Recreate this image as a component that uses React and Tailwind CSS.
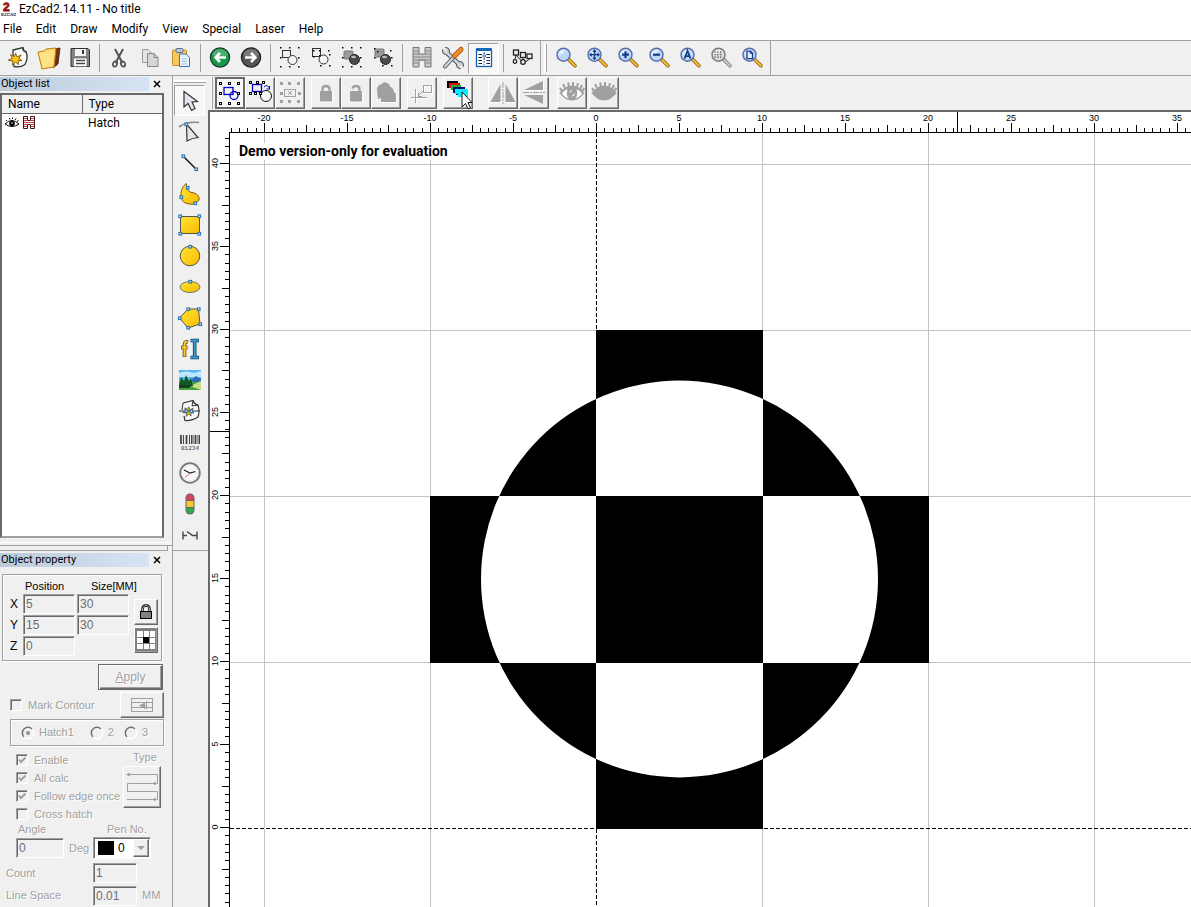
import React, { useState } from "react";

const menus = ["File", "Edit", "Draw", "Modify", "View", "Special", "Laser", "Help"];

const raised =
  "border border-t-white border-l-white border-b-[#696969] border-r-[#696969] shadow-[inset_-1px_-1px_0_#a0a0a0]";
const sunken =
  "border border-t-[#a0a0a0] border-l-[#a0a0a0] border-b-white border-r-white shadow-[inset_1px_1px_0_#696969]";
const disabledText = "text-[#a0a0a0] [text-shadow:1px_1px_0_#fff]";

const Svg = ({ children, className = "w-6 h-6", box = "0 0 24 24", crisp }) => (
  <svg
    viewBox={box}
    className={`${className} shrink-0 overflow-visible`}
    fill="none"
    shapeRendering={crisp ? "crispEdges" : "auto"}
  >
    {children}
  </svg>
);

/* ---------- main toolbar icons ---------- */

const burst = "M11 9 L12.5 13 L17 11 L14.5 14.5 L18 17 L13.8 17 L14 21.5 L11 18.5 L7.5 22 L8.2 17.5 L3 16.5 L7.5 14.5 L5.5 10.5 L9.6 12.6 Z";

const NewIcon = () => (
  <Svg>
    <path d="M7 4 L17 1.500 Q17 4.500 20 5.500 Q22.500 12 19 18.500 Q14 22 8 20.500 Q6.500 12 7 4 Z" fill="#fafafa" stroke="#333" strokeWidth="1.300" />
    <path d="M17 2 Q16 6 20 6" stroke="#333" />
    <path d={burst} transform="translate(-.5 -1) scale(.92)" fill="#ffc61a" stroke="#6b4a00" strokeWidth=".9" />
  </Svg>
);

const OpenIcon = () => (
  <Svg>
    <path d="M17 3 L23 2 L21 18 L16 22 Z" fill="#7a2c12" stroke="#4a1a08" strokeWidth=".8" />
    <path d="M1 6 L7 5 L9 3 L19 2 L17 21 L5 23 Z" fill="#ffd768" stroke="#b98112" />
    <path d="M2 7 L17 4 L15 20 L6 21 Z" fill="#ffe595" opacity=".7" />
  </Svg>
);

const SaveIcon = () => (
  <Svg>
    <path d="M3 2.500 H20 L21.500 4 V20.500 H3 Z" fill="#858585" stroke="#333" />
    <rect x="7" y="3" width="11" height="7" fill="#f4f4f4" />
    <rect x="14" y="4" width="2" height="4" fill="#333" />
    <rect x="5.500" y="12" width="13.500" height="8.500" fill="#fff" stroke="#555" strokeWidth=".6" />
    <path d="M8 14.500 H17 M8 17.500 H17" stroke="#444" strokeWidth="1.400" />
  </Svg>
);

const CutIcon = () => (
  <Svg>
    <path d="M8 3 L15.500 17 M16 3 L8.500 17" stroke="#555" strokeWidth="2" />
    <ellipse cx="8" cy="18" rx="2" ry="2.700" stroke="#555" strokeWidth="1.800" transform="rotate(20 8 18)" />
    <ellipse cx="16" cy="18" rx="2" ry="2.700" stroke="#555" strokeWidth="1.800" transform="rotate(-20 16 18)" />
  </Svg>
);

const CopyIcon = () => (
  <Svg>
    <path d="M4.500 3.500 H10 L13.500 7 V16.500 H4.500 Z" fill="#e6e6e6" stroke="#999" />
    <path d="M9.500 7.500 H16 L20 11.500 V20.500 H9.500 Z" fill="#d6d6d6" stroke="#888" />
    <path d="M16 7.500 V11.500 H20" stroke="#888" />
  </Svg>
);

const PasteIcon = () => (
  <Svg>
    <rect x="3.500" y="4" width="14" height="15.500" rx="1" fill="#f7c75c" stroke="#c08f2c" />
    <rect x="7" y="2.500" width="7" height="4" rx="1" fill="#b9c4d4" stroke="#5f7390" />
    <path d="M10.500 8 H17 L20.500 11.500 V20.500 H10.500 Z" fill="#e8f3ff" stroke="#3d73b5" />
    <path d="M12.500 13 H18 M12.500 15.500 H18 M12.500 18 H18" stroke="#9cc2ea" />
  </Svg>
);

const RoundArrow = ({ back }) => (
  <Svg>
    <circle cx="12" cy="11.500" r="9.600" fill={back ? "#17994a" : "#555"} stroke={back ? "#173d27" : "#222"} strokeWidth="1.300" />
    <path d="M4 9 A8.500 8.500 0 0 1 20 9 Q12 13 4 9 Z" fill="#fff" opacity=".22" />
    <path
      d={back ? "M18 11.500 H8 M12 7 L7.500 11.500 L12 16" : "M6 11.500 H16 M12 7 L16.500 11.500 L12 16"}
      stroke="#fff"
      strokeWidth="2.600"
    />
  </Svg>
);

const Dots = ({ color = "#000", pts }) =>
  pts.map(([x, y]) => (
    <rect key={`${x}-${y}`} x={x} y={y} width="1.500" height="1.500" fill={color} />
  ));

const eightDots = [[2, 1], [11, 1], [20, 1], [2, 11], [20, 11], [2, 20], [11, 20], [20, 20]];
const innerDots = [[4, 4], [10, 4], [10, 9], [20, 8], [4, 10], [20, 19], [11, 19]];

const CombineIcon = () => (
  <Svg>
    <rect x="4.500" y="4.500" width="8" height="7" stroke="#333" />
    <circle cx="14.500" cy="14" r="4.500" fill="#f4f4f4" stroke="#333" />
    <Dots pts={eightDots} />
  </Svg>
);

const UncombineIcon = () => (
  <Svg>
    <rect x="3.500" y="2.500" width="8" height="8" stroke="#333" />
    <circle cx="14.500" cy="13.500" r="4.500" fill="#f4f4f4" stroke="#333" />
    <Dots pts={[...innerDots, [19, 4]]} />
  </Svg>
);

const GroupIcon = ({ split }) => (
  <Svg>
    <rect x="4" y={split ? 3 : 5} width="9" height="8" rx="1" fill="#9a9a9a" stroke="#777" />
    <circle cx="14.500" cy="13.500" r="5" fill="#4a4a4a" stroke="#222" />
    <ellipse cx="13.500" cy="11" rx="2.500" ry="1.300" fill="#bbb" />
    <Dots pts={split ? [[3, 2], [6, 5], [19, 4], [3, 11], [20, 11], [11, 19], [20, 19]] : eightDots} />
  </Svg>
);

const HatchIcon = () => (
  <Svg>
    <path d="M3 1.500 H9 V8 H15 V1.500 H21 V21 H15 V14 H9 V21 H3 Z" fill="#c9c9c9" stroke="#777" />
    <path d="M3 5 H9 M15 5 H21 M3 8 H9 M15 8 H21 M3 11 H21 M3 14 H21 M3 17 H9 M15 17 H21" stroke="#888" />
  </Svg>
);

const ToolsIcon = () => (
  <Svg>
    <path d="M4.500 5.500 L19 19" stroke="#4a4f55" strokeWidth="4.500" />
    <circle cx="5" cy="5" r="3.500" fill="#c8ccd0" stroke="#4a4f55" />
    <circle cx="19" cy="19" r="3.500" fill="#c8ccd0" stroke="#4a4f55" />
    <path d="M4.500 5.500 L19 19" stroke="#d4d8dc" strokeWidth="2.600" />
    <path d="M2 1 L5 5 M22 23 L19 19.500" stroke="#f0f0f0" strokeWidth="2.600" />
    <path d="M12 12 L4 20.500" stroke="#4a4f55" strokeWidth="4" strokeLinecap="round" />
    <path d="M12 12 L4 20.500" stroke="#d4d8dc" strokeWidth="2.200" strokeLinecap="round" />
    <path d="M13.500 10 L20 3.500" stroke="#9c4a08" strokeWidth="5" strokeLinecap="round" />
    <path d="M13.500 10 L20 3.500" stroke="#f58a1f" strokeWidth="3.400" strokeLinecap="round" />
  </Svg>
);

const ListIcon = () => (
  <Svg>
    <rect x="4.500" y="3.500" width="15" height="17" fill="#fff" stroke="#0f5fb0" strokeWidth="1.300" />
    <rect x="4" y="2" width="16" height="3" rx="1" fill="#1567bd" />
    <path d="M6.500 8.500 H10 M6.500 11.500 H10 M6.500 14.500 H10 M6.500 17.500 H10 M14.500 8.500 H18 M14.500 11.500 H18 M14.500 14.500 H18 M14.500 17.500 H18" stroke="#222" />
    <path d="M12.200 6 V19" stroke="#1567bd" strokeDasharray="2 1" />
    <circle cx="12.200" cy="10" r="1.300" fill="#fff" stroke="#1567bd" />
  </Svg>
);

const NodesIcon = () => (
  <Svg>
    <rect x="2.500" y="4" width="5" height="5" stroke="#222" strokeWidth="1.300" />
    <rect x="9.500" y="6.500" width="5" height="5" stroke="#222" strokeWidth="1.300" />
    <rect x="16" y="8" width="5" height="4.500" stroke="#222" strokeWidth="1.300" />
    <circle cx="4" cy="15.500" r="1.800" stroke="#222" strokeWidth="1.300" />
    <circle cx="12" cy="16" r="2.300" stroke="#222" strokeWidth="1.300" />
    <path d="M5 9 L4 13 M5 9 L10 14.500 M12 12 V14 M18.500 13 L14.500 16" stroke="#222" />
  </Svg>
);

const zoomMarks = {
  area: null,
  pan: <path d="M9 5 V14 M4.500 9.500 H13.500 M7.500 6.500 L9 5 L10.500 6.500 M7.500 12.500 L9 14 L10.500 12.500 M6 8 L4.500 9.500 L6 11 M12 8 L13.500 9.500 L12 11" stroke="#153f85" strokeWidth="1.300" />,
  in: <path d="M9 6 V13 M5.500 9.500 H12.500" stroke="#153f85" strokeWidth="2.200" />,
  out: <path d="M5.500 9.500 H12.500" stroke="#153f85" strokeWidth="2.200" />,
  all: <path d="M6 13.500 L9 5.500 L12 13.500 M7 11 H11" stroke="#153f85" strokeWidth="1.700" />,
  dots: <path d="M5 7 H13 M5 9.500 H13 M5 12 H13" stroke="#444" strokeWidth="1.200" strokeDasharray="1.200 1.600" />,
  page: <path d="M6.500 6 H10 L12 8 V13.500 H6.500 Z M10 6 V8 H12" fill="#e8f1ff" stroke="#153f85" strokeWidth="1.300" />,
};

const ZoomIcon = ({ kind }) => {
  const gray = kind === "dots";
  return (
    <Svg>
      <g transform="translate(-.5 -.8)">
        <path d="M14 14 L20.500 20.500" stroke={gray ? "#777" : "#8a5a08"} strokeWidth="3.600" strokeLinecap="round" />
        <path d="M14.500 14.500 L20.500 20.500" stroke={gray ? "#ccc" : "#f6be35"} strokeWidth="2" strokeLinecap="round" />
        <circle cx="9" cy="9.500" r="6.500" fill={gray ? "#dedede" : "#bcd8f8"} stroke={gray ? "#777" : "#5c6ca8"} strokeWidth="1.400" />
        <path d="M4 8 Q6 4 11 4.500 Q9 9 4 10 Z" fill="#fff" opacity=".6" />
        {zoomMarks[kind]}
      </g>
    </Svg>
  );
};

/* ---------- second toolbar icons ---------- */

const HollowDots = ({ pts }) =>
  pts.map(([x, y]) => (
    <rect key={`${x}-${y}`} x={x + 0.5} y={y + 0.5} width="2" height="2" fill="#fff" stroke="#000" />
  ));

const selDots = [[1, 1], [10, 1], [19, 1], [1, 11], [19, 11], [1, 21], [10, 21], [19, 21]];

const SelectShapesIcon = () => (
  <Svg>
    <rect x="6" y="6.500" width="9" height="7" stroke="#0000c8" strokeWidth="1.300" />
    <circle cx="16" cy="14.500" r="4" stroke="#0000c8" strokeWidth="1.300" />
    <HollowDots pts={selDots} />
  </Svg>
);

const SelectPickIcon = () => (
  <Svg>
    <rect x="4.500" y="3.500" width="9" height="7" stroke="#0000c8" strokeWidth="1.300" />
    <circle cx="18" cy="15" r="5.500" fill="#f7f7f7" stroke="#111" />
    <path d="M16 6 Q19 3 21.500 7 M21.500 8 V5 M22 8 H18.500" stroke="#0000c8" />
    <HollowDots pts={[[1, 0], [8, 0], [14, 0], [1, 11], [6, 11], [11, 11]]} />
  </Svg>
);

const SelectClearIcon = () => (
  <Svg crisp>
    <rect x="6.500" y="8.500" width="11" height="7" stroke="#a0a0a0" />
    <path d="M10 10 L14 14 M14 10 L10 14" stroke="#a0a0a0" strokeWidth="1.300" />
    {[[2, 1], [10, 1], [19, 1], [2, 11], [20, 11], [2, 19], [10, 19], [19, 19]].map(([x, y]) => (
      <rect key={`${x}-${y}`} x={x} y={y} width="3" height="3" fill="#a0a0a0" />
    ))}
  </Svg>
);

const LockIcon = ({ open, multi }) => (
  <Svg>
    {multi ? (
      <>
        <path d="M3 9 Q3 4 8 3 Q9 0 13 2 Q16 3 16 6 V14 L4 18 Z" fill="#a0a0a0" />
        <path d="M7 12 Q8 6 13 5 Q19 5 20 11 L22 13 V21 H7 Z" fill="#a0a0a0" />
        <path d="M7 21.500 H22.500 V13" stroke="#fff" />
      </>
    ) : (
      <>
        <path d="M6 21 H19 V11" stroke="#fff" />
        <rect x="6" y="10" width="12" height="10.500" rx="1" fill="#a0a0a0" />
        <path d={open ? "M8.500 7.500 Q9 5 12 5 Q15.500 5 15.500 8 V11" : "M8.500 11 V8 Q8.500 5 12 5 Q15.500 5 15.500 8 V11"} stroke="#a0a0a0" strokeWidth="2.300" />
      </>
    )}
  </Svg>
);

const OriginIcon = () => (
  <Svg crisp>
    <g transform="translate(1 1)" stroke="#fff">
      <path d="M5.500 8 V22 M1 16.500 H17" />
      <rect x="13.500" y="4.500" width="8" height="7" />
    </g>
    <path d="M5.500 8 V22 M1 16.500 H17 M13 10 L8 15 M8 11.500 V15 H11.500" stroke="#a0a0a0" />
    <rect x="13.500" y="4.500" width="8" height="7" stroke="#a0a0a0" />
  </Svg>
);

const LayersIcon = () => (
  <Svg>
    <path d="M1 0 H12 V5 H4 V7 H1 Z" fill="#000" />
    <path d="M3 2 H14 V9 H5 V7 H3 Z" fill="#d81010" />
    <path d="M5 4 H15 V11 H8 V9 H5 Z" fill="#20b030" />
    <path d="M7 6 H19 V14 H10 V12 H7 Z" fill="#00107c" />
    <path d="M9 8 H22 V16 H12 V13 H9 Z" fill="#00f0ff" />
    <path d="M16 11 V26 L19.500 22.500 L22 28 L24.500 27 L22 21.500 H26 Z" fill="#fff" stroke="#000" strokeWidth=".9" />
  </Svg>
);

const MirrorXIcon = () => (
  <Svg>
    <path d="M9.500 3 V21 H-.5 Z M14.500 3 V21 H24.500 Z" fill="#a0a0a0" />
    <path d="M12 1 V23" stroke="#a0a0a0" strokeDasharray="6 1 2 1" />
    <path d="M0 21.500 H10.500 M14.500 21.500 H25" stroke="#fff" />
  </Svg>
);

const MirrorYIcon = () => (
  <Svg>
    <path d="M21 0 V9 H2 Z M21 14 V23 L2 14 Z" fill="#a0a0a0" />
    <path d="M1 11.500 H23" stroke="#a0a0a0" strokeDasharray="6 1 2 1" />
    <path d="M2 9.500 H21.500 V0" stroke="#fff" />
  </Svg>
);

const BigEye = ({ filled }) => (
  <Svg>
    <path d="M2 10 L0 7 M5 7 L3 3 M9 5.500 L8 1.500 M13 5 V1 M17 6 L18 2 M20 8 L22 4 M22 10 L24.500 7" stroke="#a0a0a0" strokeWidth="2" />
    <path d="M-.5 12 Q5 4.500 12 4.500 Q19 4.500 24.500 12 Q19 19.500 12 19.500 Q5 19.500 -.5 12 Z" fill="#a0a0a0" />
    {!filled && (
      <>
        <path d="M2 12.500 Q5 8.500 7.500 8.500 Q5.500 14 9 17.500 Q4 16 2 12.500 Z M22 12.500 Q19 8.500 16.500 8.500 Q18.500 14 15 17.500 Q20 16 22 12.500 Z" fill="#fff" />
        <path d="M10 11.500 Q10 9.500 12 9.500 M14.500 12.500 Q14.500 15 12 15" stroke="#fff" strokeWidth="1" />
      </>
    )}
  </Svg>
);

/* ---------- drawing tool icons ---------- */

const Handles = ({ pts }) =>
  pts.map(([x, y]) => (
    <rect key={`${x}-${y}`} x={x - 1} y={y - 1} width="2.500" height="2.500" fill="#fff" stroke="#2878b8" strokeWidth="1.200" />
  ));

const Gold = () => (
  <defs>
    <linearGradient id="gold" x1="0" y1="0" x2="1" y2="1">
      <stop offset="0" stopColor="#ffe534" />
      <stop offset="1" stopColor="#f9b900" />
    </linearGradient>
  </defs>
);

const PickTool = () => (
  <Svg>
    <path d="M6 2.500 V18 L10 14.500 L13.500 21.500 L17 19.500 L14 13 L19.500 12.500 Z" fill="#e4e6ee" stroke="#333" strokeWidth="1.200" />
  </Svg>
);
const NodeTool = () => (
  <Svg>
    <path d="M1 7 Q9 1 21 2.500" stroke="#888" strokeWidth="1.600" />
    <path d="M8.500 4 L9 21 Q14 18 20 17.500 Z" fill="#e4e6ee" stroke="#333" strokeWidth="1.200" />
    <Handles pts={[[8, 4]]} />
  </Svg>
);
const LineTool = () => (
  <Svg>
    <path d="M5 5 L18 18" stroke="#111" strokeWidth="1.400" />
    <Handles pts={[[5, 5], [18, 18]]} />
  </Svg>
);
const CurveTool = () => (
  <Svg>
    <Gold />
    <path d="M3 15 Q2 7 8 1.500 L9.500 6 Q9 10 16 11 Q22 13 21 18 Q18 23 11 22 Q4 21 3 15 Z" fill="url(#gold)" stroke="#8a5512" />
    <Handles pts={[[9.500, 5.500], [3, 15], [17, 21]]} />
  </Svg>
);
const RectTool = () => (
  <Svg>
    <rect x="2.500" y="3.500" width="19" height="17" fill="url(#gold)" stroke="#555" />
    <Handles pts={[[2, 3], [21, 3], [2, 20.500], [21, 20.500]]} />
  </Svg>
);
const CircleTool = () => (
  <Svg>
    <circle cx="12" cy="12" r="9.800" fill="url(#gold)" stroke="#555" />
    <Handles pts={[[12, 2.500]]} />
  </Svg>
);
const EllipseTool = () => (
  <Svg>
    <ellipse cx="12" cy="12" rx="10" ry="5.500" fill="url(#gold)" stroke="#777" />
    <Handles pts={[[12, 6.500]]} />
  </Svg>
);
const PolygonTool = () => (
  <Svg>
    <path d="M1.500 12 L10 3 L20.500 3 L22 18 L10 22 Z" fill="url(#gold)" stroke="#555" />
    <Handles pts={[[1.500, 12], [10, 3], [20.500, 3], [22, 18], [10, 21.500]]} />
  </Svg>
);
const TextTool = () => (
  <Svg>
    <path d="M10 5 Q6.500 4 6.500 7.500 V20 M3 10.500 H9.500" stroke="#5b4306" strokeWidth="3.600" />
    <path d="M9.500 5 Q6.500 4 6.500 7.500 V19.500 M3.500 10.500 H9" stroke="#ffcd2a" strokeWidth="2" />
    <path d="M12.500 3.500 H21 M12.500 20.500 H21 M16.700 3 V21" stroke="#12405f" strokeWidth="3.600" />
    <path d="M13 3.500 H20.500 M13 20.500 H20.500 M16.700 3 V21" stroke="#3e9bd0" strokeWidth="2" />
  </Svg>
);
const ImageTool = () => (
  <Svg>
    <rect x="1" y="2" width="22" height="20" fill="#58b5ee" />
    <path d="M1 5 Q8 2 16 5 L23 3 V9 H1 Z" fill="#bfe8ff" />
    <path d="M13 12 L18 8 L23 11 V14 H10 Z" fill="#2f6db5" />
    <path d="M1 14 H23 V22 H1 Z" fill="#46a03a" />
    <path d="M23 13 L12 18 L23 22 Z" fill="#c8dd8a" />
    <path d="M1 18 L3 9 L6 13 L8 7 L11 13 L13 10 L15 18 Z" fill="#125a24" />
    <path d="M1 17 H15 L11 20 H1 Z" fill="#16421c" />
  </Svg>
);
const VectorTool = () => (
  <Svg>
    <path d="M5 4 L15 1.500 Q16 5 20 6 Q22 13 20 18 Q14 22 7 21.500 L6 17" fill="#f7f7f7" stroke="#333" strokeWidth="1.200" />
    <path d="M5 4 L4 11" stroke="#333" />
    <path d="M15 2 L14 7 L20 6" stroke="#333" />
    <path d={burst} transform="translate(2.500 1) scale(.75)" fill="#f5cc31" stroke="#4a4a20" />
    <path d="M1 12 H22" stroke="#333" />
    <Handles pts={[[8, 12], [13, 12]]} />
  </Svg>
);
const BarcodeTool = () => (
  <Svg>
    <path d="M3 5 V14 M8.500 5 V14 M17.500 5 V14" stroke="#444" strokeWidth="1.800" />
    <path d="M5.500 5 V14 M11.500 5 V14 M13.500 5 V14 M15 5 V14 M20 5 V14 M21.500 5 V14" stroke="#444" />
    <text x="12" y="19.500" textAnchor="middle" fontSize="6" fill="#333" fontFamily="Liberation Mono, monospace" textRendering="geometricPrecision">01234</text>
  </Svg>
);
const ClockTool = () => (
  <Svg>
    <circle cx="12" cy="12" r="9.800" fill="#f8f8f8" stroke="#777" strokeWidth="1.800" />
    <circle cx="12" cy="12" r="7.800" stroke="#bbb" strokeWidth=".8" strokeDasharray="1 3" />
    <path d="M6 9 L12 12 L17.500 10.500" stroke="#222" strokeWidth="1.200" />
    <path d="M12 12 L7 16.500" stroke="#e06060" />
  </Svg>
);
const LightTool = () => (
  <Svg>
    <rect x="7.500" y="1.500" width="9" height="21" rx="4.500" fill="#666" />
    <path d="M8.500 8 V6 A3.500 3.500 0 0 1 15.500 6 V8 Z" fill="#d6455c" />
    <rect x="8.500" y="9" width="7" height="6" fill="#f7c928" />
    <path d="M8.500 16 V18 A3.500 3.500 0 0 0 15.500 18 V16 Z" fill="#30a94e" />
  </Svg>
);
const AxisTool = () => (
  <Svg>
    <path d="M5 8.500 V16.500 M19 8.500 V16.500 M5 12.500 H9 M9 8.500 L14.500 12.500 H19" stroke="#444" strokeWidth="1.400" />
  </Svg>
);

const mainTools = [
  [["New", <NewIcon />], ["Open", <OpenIcon />], ["Save", <SaveIcon />]],
  [["Cut", <CutIcon />], ["Copy", <CopyIcon />], ["Paste", <PasteIcon />]],
  [["Undo", <RoundArrow back />], ["Redo", <RoundArrow />]],
  [["Combine", <CombineIcon />], ["Uncombine", <UncombineIcon />], ["Group", <GroupIcon />], ["Ungroup", <GroupIcon split />]],
  [["Hatch", <HatchIcon />], ["System parameters", <ToolsIcon />], ["Object list", <ListIcon />, true]],
  [["Nodes", <NodesIcon />]],
];

const selectTools = [
  [["Select", <SelectShapesIcon />], ["Invert selection", <SelectPickIcon />], ["Clear selection", <SelectClearIcon />]],
  [["Lock", <LockIcon />], ["Unlock", <LockIcon open />], ["Unlock all", <LockIcon multi />]],
  [["Put to origin", <OriginIcon />]],
  [["Layers", <LayersIcon />]],
];

const drawTools = [
  ["Pick", <PickTool />],
  ["Node edit", <NodeTool />],
  ["Line", <LineTool />],
  ["Curve", <CurveTool />],
  ["Rectangle", <RectTool />],
  ["Circle", <CircleTool />],
  ["Ellipse", <EllipseTool />],
  ["Polygon", <PolygonTool />],
  ["Text", <TextTool />],
  ["Bitmap", <ImageTool />],
  ["Vector file", <VectorTool />],
  ["Barcode", <BarcodeTool />],
  ["Delay", <ClockTool />],
  ["Input port", <LightTool />],
  ["Extend axis", <AxisTool />],
];

const FlatButton = ({ label, pressed, onClick, children }) => (
  <button
    type="button"
    aria-label={label}
    onClick={onClick}
    className={`flex h-[31px] w-[31px] shrink-0 items-center justify-center ${
      pressed ? "border border-t-[#a0a0a0] border-l-[#a0a0a0] border-b-white border-r-white bg-[#f8f8f8]" : ""
    }`}
  >
    {children}
  </button>
);

const BevelButton = ({ label, pressed, children }) => (
  <button
    type="button"
    aria-label={label}
    className={`flex h-8 w-[30px] shrink-0 items-center justify-center ${
      pressed ? "border-2 border-[#696969] bg-[#f8f8f8]" : raised
    }`}
  >
    {children}
  </button>
);

const MainToolbar = () => (
  <div className="flex h-9 shrink-0 items-center border-y border-[#a0a0a0] pl-0.5">
    {mainTools.map((group, i) => (
      <div key={i} className="flex items-center">
        {i > 0 && <span className="mr-[3px] ml-1 h-7 w-px shrink-0 bg-[#a0a0a0]" />}
        {group.map(([label, icon, pressed]) => (
          <FlatButton key={label} label={label} pressed={pressed}>
            {icon}
          </FlatButton>
        ))}
      </div>
    ))}
    <span className="ml-0.5 h-full w-1 shrink-0 border-l border-[#a0a0a0]" />
    <span className="mr-1 h-7 w-[3px] shrink-0 border-r border-[#a0a0a0] bg-white" />
    <div className="flex h-full items-center border-r border-[#a0a0a0] pr-0.5">
      {Object.keys(zoomMarks).map((kind) => (
        <FlatButton key={kind} label={`Zoom ${kind}`}>
          <ZoomIcon kind={kind} />
        </FlatButton>
      ))}
    </div>
  </div>
);

const SelectToolbar = () => (
  <div className="flex h-[34px] shrink-0 items-center overflow-hidden pl-[3px]">
    <span className="mr-0.5 h-8 w-[2px] shrink-0 border-r border-[#a0a0a0] bg-white" />
    <div className="flex gap-1.5">
      {selectTools.map((group, i) => (
        <div key={i} className="flex">
          {group.map(([label, icon]) => (
            <BevelButton key={label} label={label} pressed={label === "Select"}>
              {icon}
            </BevelButton>
          ))}
        </div>
      ))}
    </div>
    <div className="ml-[15px] flex gap-px">
      <BevelButton label="Mirror horizontal"><MirrorXIcon /></BevelButton>
      <BevelButton label="Mirror vertical"><MirrorYIcon /></BevelButton>
    </div>
    <div className="ml-2 flex gap-0.5">
      <BevelButton label="Show"><BigEye /></BevelButton>
      <BevelButton label="Hide"><BigEye filled /></BevelButton>
    </div>
  </div>
);

const DrawToolbar = () => {
  const [tool, setTool] = useState("Pick");
  return (
    <div className="flex w-9 shrink-0 flex-col border-l border-[#a0a0a0]">
      <div className="flex flex-col items-center border-b border-[#a0a0a0] pr-0.5">
        <span className="mt-1 mb-0.5 h-[3px] w-8 border-y border-t-white border-b-[#a0a0a0] bg-white" />
        {drawTools.map(([label, icon]) => (
          <FlatButton key={label} label={label} pressed={tool === label} onClick={() => setTool(label)}>
            {icon}
          </FlatButton>
        ))}
      </div>
    </div>
  );
};

/* ---------- canvas ---------- */

const UNIT = 16.6;
const X0 = 386;
const Y0 = 716;
const px = (v) => Math.round(X0 + v * UNIT);
const py = (v) => Math.round(Y0 - v * UNIT);

const range = (from, to) => Array.from({ length: Math.max(0, to - from + 1) }, (_, i) => from + i);
const tickSize = (i) => (i % 10 === 0 ? 10 : i % 5 === 0 ? 8 : 5);

// edges include the grid pixel on the right and at the bottom
const rectPath = (x1, y1, x2, y2) => `M${px(x1)} ${py(y1) + 1} H${px(x2) + 1} V${py(y2)} H${px(x1)} Z`;
const circlePath = `M${px(-7) + 1} ${py(15)} A198.500 198.500 0 0 1 ${px(17)} ${py(15)} A198.500 198.500 0 0 1 ${px(-7) + 1} ${py(15)} Z`;
const shape = [rectPath(0, 0, 10, 30), rectPath(-10, 10, 20, 20), circlePath].join(" ");

const Canvas = () => {
  // last ruler numbers that still fit in the window
  const lastX = Math.floor((window.innerWidth - 218 - X0) / UNIT / 5);
  const lastY = Math.floor((window.innerHeight - 120 - Y0) / UNIT / 5);

  return (
    <div className="min-h-0 flex-1 overflow-hidden border-t-2 border-l-2 border-[#696969] bg-white">
      <svg className="block h-full w-full" fontFamily="Liberation Sans, Arial, sans-serif">
        <g shapeRendering="crispEdges">
          {range(-2, 12).map((i) => (
            <line key={i} x1={px(i * 10) + 0.5} x2={px(i * 10) + 0.5} y1="21" y2="100%" stroke="#c4c4c4" />
          ))}
          {range(-3, 4).map((i) => (
            <line key={i} x1="20" x2="100%" y1={py(i * 10) + 0.5} y2={py(i * 10) + 0.5} stroke="#c4c4c4" />
          ))}
          <line x1={X0 + 0.5} x2={X0 + 0.5} y1="21" y2="100%" stroke="#fff" />
          <line x1="20" x2="100%" y1={Y0 + 0.5} y2={Y0 + 0.5} stroke="#fff" />
          <line x1={X0 + 0.5} x2={X0 + 0.5} y1="21" y2="100%" stroke="#000" strokeDasharray="4 2" />
          <line x1="20" x2="100%" y1={Y0 + 0.5} y2={Y0 + 0.5} stroke="#000" strokeDasharray="4 2" />
        </g>
        <path d={circlePath} fill="#fff" />
        <path d={shape} fillRule="evenodd" fill="#000" />
        <g stroke="#000" shapeRendering="crispEdges">
          <line x1="19" x2="100%" y1="20.5" y2="20.5" />
          <line x1="19.5" x2="19.5" y1="20" y2="100%" />
          {range(-44, 240).map((i) => {
            const x = px(i / 2) + 0.5;
            return <line key={i} x1={x} x2={x} y1={21 - tickSize(i)} y2="20" />;
          })}
          {range(-60, 83).map((i) => {
            const y = py(i / 2) - 0.5;
            return <line key={i} x1={20 - tickSize(i)} x2="19" y1={y} y2={y} />;
          })}
          <line x1="747.5" x2="747.5" y1="0" y2="20" />
          <line x1="0" x2="19" y1="319.5" y2="319.5" />
        </g>
        <g fontSize="9" fill="#000" textAnchor="middle">
          {range(-4, lastX).map((i) => (
            <text key={i} x={px(i * 5)} y="9">
              {i * 5}
            </text>
          ))}
          {range(lastY, 8).map((i) => (
            <text key={i} transform={`translate(8 ${py(i * 5) - 1}) rotate(-90)`}>
              {i * 5}
            </text>
          ))}
        </g>
        <rect x="28" y="31" width="220" height="17" fill="#fff" />
        <text x="29" y="44" fontFamily="Roboto, sans-serif" fontSize="14" fontWeight="700">
          Demo version-only for evaluation
        </text>
      </svg>
    </div>
  );
};

/* ---------- left panels ---------- */

const PanelTitle = ({ children }) => (
  <div className="flex h-3.5 shrink-0 items-center">
    <h2 className="h-full w-[149px] bg-linear-to-r from-[#bccbda] to-[#d6e4f3] pl-px text-[11px] leading-[14px]">
      {children}
    </h2>
    <button type="button" aria-label={`Close ${children}`} className="flex h-full w-4 items-center justify-center">
      <Svg className="h-1.5 w-1.5" box="0 0 6 6">
        <path d="M0 0 L6 6 M6 0 L0 6" stroke="#000" strokeWidth="1.500" />
      </Svg>
    </button>
  </div>
);

const ObjectList = () => (
  <section className="flex min-h-0 flex-1 flex-col pt-px">
    <PanelTitle>Object list</PanelTitle>
    <div className="mt-0.5 mr-2 min-h-0 flex-1 overflow-hidden border-2 border-t-[#696969] border-l-[#696969] border-r-[#696969] border-b-[#a0a0a0] bg-white">
      <table className="w-full table-fixed leading-4">
        <thead>
          <tr className="h-[18px] bg-[#f0f0f0] text-left">
            <th className="w-1/2 border-r border-b border-[#696969] pl-1.5 font-normal">Name</th>
            <th className="border-b border-[#696969] pl-1.5 font-normal">Type</th>
          </tr>
        </thead>
        <tbody>
          <tr className="h-[19px]">
            <td className="pl-[3px]">
              <span className="flex items-center gap-[3px]">
                <Svg className="h-3.5 w-3.5" box="0 0 14 14">
                  <path d="M0 8 Q7 1 14 8 Q7 13 0 8 Z" stroke="#000" />
                  <path d="M2 5 L1 4 M5 3.500 L4.500 2 M7.500 3 V1.500 M10 4 L11 2.500 M12 5.500 L13.500 4.500" stroke="#000" />
                  <circle cx="7" cy="7.500" r="2.800" fill="#000" />
                  <circle cx="7" cy="7" r=".8" fill="#fff" />
                </Svg>
                <Svg className="h-3.5 w-3.5" box="0 0 14 14">
                  <path d="M1.500 .5 H5.500 V4.500 H8.500 V.5 H12.500 V12.500 H8.500 V8.500 H5.500 V12.500 H1.500 Z" fill="#fff" stroke="#401010" />
                  <path d="M2 2.500 H5 M9 2.500 H12 M2 4.500 H5 M9 4.500 H12 M2 6.500 H12 M2 8.500 H5 M9 8.500 H12 M2 10.500 H5 M9 10.500 H12" stroke="#c84040" />
                </Svg>
              </span>
            </td>
            <td className="pl-1.5">Hatch</td>
          </tr>
        </tbody>
      </table>
    </div>
  </section>
);

const NumInput = ({ id, value, className = "", label }) => (
  <input
    id={id}
    type="text"
    disabled
    defaultValue={value}
    aria-label={label}
    className={`${sunken} h-5 min-w-0 bg-[#f0f0f0] pl-0.5 text-[12px] text-[#6d6d6d] ${className}`}
  />
);

const Check = ({ children, checked }) => (
  <label className={`flex h-[18px] items-center gap-1.5 ${disabledText}`}>
    <span className="relative flex h-3 w-3">
      <input type="checkbox" disabled defaultChecked={checked} className={`${sunken} h-3 w-3 appearance-none`} />
      {checked && (
        <Svg className="absolute top-0 left-0 h-3 w-3" box="0 0 12 12">
          <path d="M3 5.500 L5 8 L9.500 3.500" stroke="#a0a0a0" strokeWidth="2" />
        </Svg>
      )}
    </span>
    {children}
  </label>
);

const Radio = ({ children, checked }) => (
  <label className={`flex items-center gap-[5px] ${disabledText}`}>
    <span className="relative flex h-3 w-3">
      <input type="radio" name="hatch" disabled defaultChecked={checked} className="h-3 w-3 appearance-none" />
      <Svg className="absolute top-0 left-0 h-3 w-3" box="0 0 12 12">
        <path d="M2 10 A5 5 0 0 1 10 2" stroke="#707070" strokeWidth="1.500" />
        <path d="M2 10 A5 5 0 0 0 10 2" stroke="#fff" strokeWidth="1.500" />
        {checked && <circle cx="6" cy="6" r="2" fill="#909090" />}
      </Svg>
    </span>
    {children}
  </label>
);

const PropButton = ({ label, className = "", children }) => (
  <button type="button" aria-label={label} className={`${raised} flex items-center justify-center ${className}`}>
    {children}
  </button>
);

const Position = () => (
  <div className="mt-[7px] ml-0.5 flex w-40 gap-[5px] border border-[#a0a0a0] pt-1 pr-px pb-1 pl-[7px] shadow-[inset_1px_1px_0_#fff,1px_1px_0_#fff]">
    <div className="grid grid-cols-[11px_52px_52px] items-center gap-x-0.5 gap-y-px">
      <span />
      <span className="h-[14px] pl-0.5 leading-[14px]">Position</span>
      <span className="h-[14px] pl-3.5 leading-[14px] whitespace-nowrap">Size[MM]</span>
      <label htmlFor="pos-x" className="text-[12px]">X</label>
      <NumInput id="pos-x" value="5" />
      <NumInput label="Width" value="30" />
      <label htmlFor="pos-y" className="text-[12px]">Y</label>
      <NumInput id="pos-y" value="15" />
      <NumInput label="Height" value="30" />
      <label htmlFor="pos-z" className="text-[12px]">Z</label>
      <NumInput id="pos-z" value="0" />
    </div>
    <div className="mt-5 flex flex-col gap-0.5">
      <PropButton label="Lock ratio" className="h-[26px] w-6">
        <Svg className="h-4 w-4" box="0 0 16 16">
          <path d="M4.500 8 V5 Q4.500 1.500 8 1.500 Q11.500 1.500 11.500 5 V8" stroke="#000" strokeWidth="2.400" />
          <path d="M4.500 8 V5 Q4.500 1.500 8 1.500 Q11.500 1.500 11.500 5 V8" stroke="#ddd" strokeWidth=".8" />
          <rect x="2.500" y="7.500" width="11" height="7" fill="#808080" stroke="#000" />
        </Svg>
      </PropButton>
      <PropButton label="Reference point" className="h-[26px] w-6 bg-[#808080]">
        <Svg className="h-[18px] w-[18px]" box="0 0 18 18" crisp>
          <rect width="18" height="18" fill="#fff" />
          <path d="M6 0 V18 M12 0 V18 M0 6 H18 M0 12 H18" stroke="#808080" />
          <rect x="6" y="6" width="6" height="6" fill="#000" />
        </Svg>
      </PropButton>
    </div>
  </div>
);

const ObjectProperty = () => (
  <section className="shrink-0 pt-px">
    <PanelTitle>Object property</PanelTitle>
    <div className="font-[Liberation_Sans,Arial,sans-serif] text-[11px] leading-[13px]">
      <Position />
      <div className="mt-[3px] flex justify-end pr-[9px]">
        <button type="button" disabled className={`h-[26px] w-[65px] border border-[#696969] text-[12px] shadow-[inset_1px_1px_0_#fff,inset_-1px_-1px_0_#696969,inset_-2px_-2px_0_#a0a0a0] ${disabledText}`}>
          <u>A</u>pply
        </button>
      </div>
      <div className="mt-0.5 flex items-center justify-between pr-2 pl-2.5">
        <Check>Mark Contour</Check>
        <PropButton label="Contour order" className="h-[26px] w-11">
          <Svg className="h-4 w-6" box="0 0 24 16" crisp>
            <path d="M1 1.500 H23 M1 5.500 H23 M1 10.500 H23 M1 14.500 H23 M1.500 1 V15 M22.500 1 V15 M9 8.500 H17 M16.500 4 V12" stroke="#a0a0a0" />
            <path d="M10 8.500 L15 5 V12 Z" fill="#a0a0a0" />
          </Svg>
        </PropButton>
      </div>
      <div className="mt-px mr-2 ml-2.5 flex h-[27px] items-center border border-[#a0a0a0] pl-[11px] shadow-[inset_1px_1px_0_#fff,1px_1px_0_#fff]">
        <Radio checked>Hatch1</Radio>
        <span className="w-[17px]" />
        <Radio>2</Radio>
        <span className="w-[11px]" />
        <Radio>3</Radio>
      </div>
      <div className="mt-[5px] flex justify-between pr-[11px] pl-4">
        <div className="whitespace-nowrap">
          <Check checked>Enable</Check>
          <Check checked>All calc</Check>
          <Check checked>Follow edge once</Check>
          <Check>Cross hatch</Check>
        </div>
        <div className="flex w-[38px] shrink-0 flex-col gap-0.5">
          <span className={`pl-2.5 ${disabledText}`}>Type</span>
          <PropButton label="Hatch type" className="h-[42px] w-[38px]">
            <Svg className="h-8 w-8" box="0 0 32 32">
              <path d="M1 3.500 H31.500 V12.500 H1.500 V20.500 H31.500 V28.500 H1" stroke="#a0a0a0" />
              <path d="M0 3.500 L4 1.500 V5.500 Z M31 12.500 L28 10.500 V14.500 Z M31 28.500 L28 26.500 V30.500 Z" fill="#a0a0a0" />
            </Svg>
          </PropButton>
        </div>
      </div>
      <div className={`flex ${disabledText}`}>
        <label htmlFor="angle" className="w-[89px] pl-[18px]">Angle</label>
        <label htmlFor="pen" className="pl-[18px]">Pen No.</label>
      </div>
      <div className="mt-px flex items-center pl-4">
        <NumInput id="angle" value="0" className="w-12" />
        <span className={`w-[29px] pl-[5px] ${disabledText}`}>Deg</span>
        <div className={`${sunken} flex h-[22px] w-[58px] items-center bg-white p-px pl-1`}>
          <span className="h-3.5 w-4 shrink-0 bg-black" />
          <span className="relative flex h-full flex-1">
            <select id="pen" className="h-full w-full appearance-none pl-1 text-[12px] outline-none">
              <option>0</option>
              <option>1</option>
            </select>
            <span className={`${raised} pointer-events-none absolute top-0 right-0 flex h-full w-4 items-center justify-center bg-[#f0f0f0]`}>
              <Svg className="h-1 w-2" box="0 0 8 4">
                <path d="M0 0 H8 L4 4 Z" fill="#a0a0a0" />
              </Svg>
            </span>
          </span>
        </div>
      </div>
      <div className="mt-[3px] flex h-[22px] items-center pl-1.5">
        <label htmlFor="count" className={`w-[87px] ${disabledText}`}>Count</label>
        <NumInput id="count" value="1" className="w-11" />
      </div>
      <div className="flex h-[23px] items-center pl-1.5">
        <label htmlFor="space" className={`w-[87px] ${disabledText}`}>Line Space</label>
        <NumInput id="space" value="0.01" className="w-11" />
        <span className={`pl-[5px] ${disabledText}`}>MM</span>
      </div>
    </div>
  </section>
);

const App = () => {
  return (
    <div className="flex h-screen flex-col overflow-hidden bg-[#f0f0f0] font-[Roboto,sans-serif] text-[12px] text-black">
      <header className="shrink-0 bg-white">
        <div className="flex h-[18px] items-center gap-[3px]">
          <svg viewBox="0 0 16 18" className="h-[18px] w-4" fontFamily="Liberation Sans, Arial, sans-serif" textRendering="geometricPrecision">
            <text x="3" y="11" fontSize="12" fontWeight="700" fill="#c01818" stroke="#801010" strokeWidth=".8">2</text>
            <text x="1" y="16" fontSize="4.500" fontWeight="700" fill="#334">EZCAD</text>
          </svg>
          <h1 className="leading-4">EzCad2.14.11 - No title</h1>
        </div>
        <nav className="flex h-[22px] items-center gap-3.5 pl-[3px]">
          {menus.map((name) => (
            <button key={name} type="button">
              {name}
            </button>
          ))}
        </nav>
      </header>
      <MainToolbar />
      <main className="flex min-h-0 flex-1">
        <aside className="flex w-[172px] shrink-0 flex-col">
          <ObjectList />
          <div className="flex h-[14px] shrink-0 flex-col">
            <span className="mt-1 h-1 border-y border-t-white border-b-[#a0a0a0]" />
            <span className="mr-1 h-[5px] border-r border-b border-[#a0a0a0]" />
          </div>
          <ObjectProperty />
        </aside>
        <DrawToolbar />
        <div className="flex min-w-0 flex-1 flex-col">
          <SelectToolbar />
          <Canvas />
        </div>
      </main>
    </div>
  );
};

export default App;
